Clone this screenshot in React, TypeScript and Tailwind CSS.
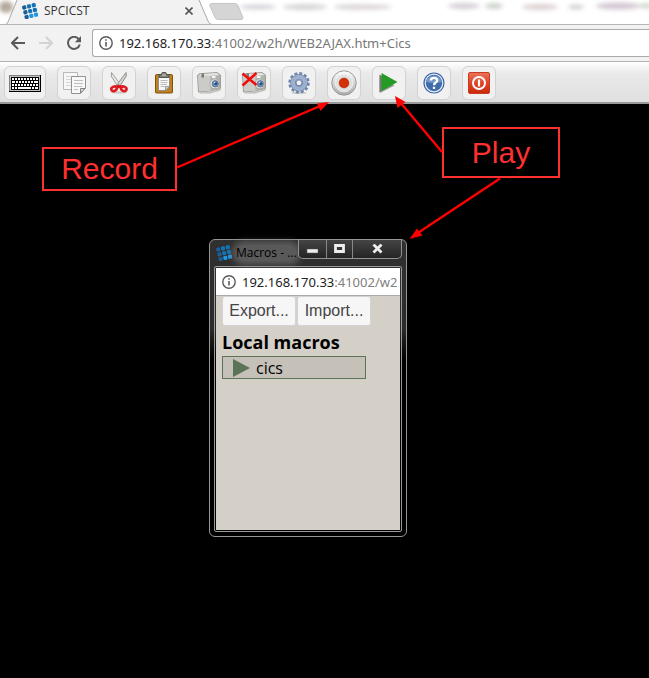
import type { ReactNode } from "react";

function DotsLogo({ className }: { className?: string }) {
  const dots = [0, 1, 2].flatMap((r) => [0, 1, 2].map((c) => ({ r, c })));
  return (
    <svg viewBox="0 0 16 16" className={className} aria-hidden="true">
      <g transform="rotate(-14 8 8)">
        {dots.map(({ r, c }) => (
          <rect
            key={`${r}${c}`}
            x={1.2 + c * 4.9}
            y={1.2 + r * 4.9}
            width="4.1"
            height="4.1"
            rx="1.3"
            fill={c === 0 ? "#1c5d93" : r === 2 ? "#1f97e0" : "#1272b4"}
          />
        ))}
      </g>
    </svg>
  );
}

function InfoIcon() {
  return (
    <svg viewBox="0 0 14 14" className="size-3.5 shrink-0" aria-hidden="true">
      <circle cx="7" cy="7" r="6.2" fill="none" stroke="#5a5a5a" strokeWidth="1.4" />
      <path d="M7 6v4.4M7 3.2v1.6" stroke="#5a5a5a" strokeWidth="1.6" />
    </svg>
  );
}

function NavButton({ label, children }: { label: string; children: ReactNode }) {
  return (
    <button type="button" aria-label={label} className="flex size-7 items-center justify-center">
      {children}
    </button>
  );
}

function ToolButton({ label, wide, children }: { label: string; wide?: boolean; children: ReactNode }) {
  return (
    <button
      type="button"
      aria-label={label}
      title={label}
      className={`h-[34px] shrink-0 overflow-hidden rounded-md border border-[#d2d2d2] bg-[#f1f1f1] ${wide ? "w-[42px]" : "w-[34px]"}`}
    >
      <svg viewBox={wide ? "1 1 40 32" : "1 1 32 32"} className="size-full" aria-hidden="true">
        {children}
      </svg>
    </button>
  );
}

function CameraShape() {
  return (
    <g>
      <path d="M7 26.5 18 26 28.500 23V24.500L18 27.500H8Z" fill="#8b8b87" opacity="0.500" />
      <path d="M5.500 9.500 7 7.800 25 6.500 28.500 9V22.500L18 25 6.500 26Z" fill="#b9bbb5" stroke="#8d8f88" strokeWidth="0.800" />
      <path d="M6 10 18.500 9.500V24.800L7 25.600Z" fill="#cbccc8" />
      <path d="M18.500 9.500 28 9V22.200L18.500 24.800Z" fill="#b2b4ae" />
      <path d="M6.500 9.500 8 8.200 24.500 7 27.500 9 18.500 9.800Z" fill="#e6e7e4" />
      <rect x="9.500" y="7.500" width="2.500" height="4" fill="#777973" />
      <rect x="20" y="10" width="3.500" height="2.200" fill="#f5f5f5" />
      <circle cx="22.800" cy="17.800" r="4.900" fill="#e2e3e0" stroke="#9a9c96" strokeWidth="0.700" />
      <circle cx="23.300" cy="17.800" r="3.200" fill="#6b8fbd" stroke="#5b6b80" strokeWidth="0.800" />
      <circle cx="23.800" cy="17.500" r="1.500" fill="#274b7c" />
      <circle cx="22.600" cy="16.500" r="0.800" fill="#d5e7f8" />
    </g>
  );
}

function KeyboardShape() {
  return (
    <g shapeRendering="crispEdges">
      <rect x="5" y="9" width="32" height="17" fill="#000" />
      <rect x="5" y="9" width="31" height="16" fill="#808080" />
      <rect x="6" y="10" width="30" height="15" fill="#c0c0c0" />
      <rect x="7" y="11" width="28" height="13" fill="#000" />
      <path d="M8 13H34" stroke="#fff" strokeWidth="2" strokeDasharray="2 1" />
      <path d="M8 16H11M12 16H14M15 16H17M18 16H20M21 16H23M24 16H26M27 16H29M30 16H34" stroke="#fff" strokeWidth="2" />
      <path d="M8 19H10M11 19H13M14 19H16M17 19H19M20 19H22M23 19H25M26 19H28M29 19H31M32 19H34" stroke="#fff" strokeWidth="2" />
      <path d="M8 22H10M11 22H13M14 22H27M28 22H30M31 22H34" stroke="#fff" strokeWidth="2" />
    </g>
  );
}

function Toolbar() {
  return (
    <div
      role="toolbar"
      aria-label="Session"
      className="flex h-[42px] gap-[11px] border-b-2 border-[#999] bg-linear-to-b from-white via-[#e9e9e9] via-30% to-[#e0e0e0] px-1 pt-1"
    >
      <ToolButton label="Keyboard" wide>
        <KeyboardShape />
      </ToolButton>
      <ToolButton label="Copy">
        <path d="M6.500 6.500H20.500V23.500H6.500Z" fill="#f7f7f7" stroke="#b8b8b8" />
        <path d="M9 10.500H18M9 13.500H18M9 16.500H18M9 19.500H18" stroke="#d5d5d5" />
        <path d="M14.500 10.500H28.500V22L23.500 27.500H14.500Z" fill="#f8f8f8" stroke="#929292" />
        <path d="M17 14.500H26M17 17.500H26M17 20.500H25M17 23.500H21" stroke="#bebebe" />
        <path d="M23.500 27V22.500H28Z" fill="#ddd" stroke="#777" strokeWidth="0.900" />
      </ToolButton>
      <ToolButton label="Cut">
        <ellipse cx="17" cy="26.500" rx="8" ry="1.200" fill="#ccc" />
        <path d="M9.500 6.500 18.800 19 16.200 21 9.200 10Z" fill="#e9e9e6" stroke="#96968f" strokeWidth="0.900" />
        <path d="M24 6.500 14.800 19 17.300 21 24.300 10Z" fill="#d6d7d3" stroke="#85857f" strokeWidth="0.900" />
        <ellipse cx="12" cy="22.800" rx="2.800" ry="2.200" fill="#f1f1f1" stroke="#df1d20" strokeWidth="2.600" transform="rotate(-25 12 22.800)" />
        <ellipse cx="21.800" cy="22.800" rx="2.800" ry="2.200" fill="#f1f1f1" stroke="#df1d20" strokeWidth="2.600" transform="rotate(25 21.800 22.800)" />
        <path d="M13 20 16.800 18.500 20.800 20 16.800 22.500Z" fill="#d5171b" />
      </ToolButton>
      <ToolButton label="Paste">
        <rect x="8.500" y="8.500" width="17" height="18.500" rx="1" fill="#bf801f" stroke="#80510e" />
        <path d="M11.500 10.500H22.500V21L19 24.500H11.500Z" fill="#f8f8f8" stroke="#777" strokeWidth="0.700" />
        <path d="M13.500 14.500H20.500M13.500 16.500H20.500M13.500 18.500H20M13.500 20.500H18" stroke="#b5b5b5" strokeWidth="0.900" />
        <path d="M18.500 24.500V20.500H22.500Z" fill="#ccc" stroke="#777" strokeWidth="0.600" />
        <path d="M12 11.500V9H14.200L15.200 6.500H18.800L19.800 9H22V11.500Z" fill="#83857d" stroke="#54564f" />
        <path d="M15 9H19" stroke="#cbccc7" />
      </ToolButton>
      <ToolButton label="Capture screen">
        <CameraShape />
      </ToolButton>
      <ToolButton label="Remove capture">
        <CameraShape />
        <path d="M5.500 7.500 19.500 19M19.500 7 5.500 19.500" stroke="#f20d0d" strokeWidth="2.600" />
      </ToolButton>
      <ToolButton label="Settings">
        <ellipse cx="17" cy="26.800" rx="8" ry="1.300" fill="#ccc" />
        <circle cx="17" cy="16.800" r="9.200" fill="none" stroke="#7085aa" strokeWidth="3" strokeDasharray="2.900 1.917" />
        <circle cx="17" cy="16.800" r="6" fill="none" stroke="#7287ab" strokeWidth="5.600" />
        <circle cx="17" cy="16.800" r="6" fill="none" stroke="#9db0cf" strokeWidth="4.200" />
        <circle cx="17" cy="16.800" r="3" fill="#f1f1f1" stroke="#667ba3" />
      </ToolButton>
      <ToolButton label="Record macro">
        <defs>
          <linearGradient id="dial" x1="0" y1="0" x2="0" y2="1">
            <stop offset="0" stopColor="#fff" />
            <stop offset="1" stopColor="#aaa" />
          </linearGradient>
        </defs>
        <circle cx="17" cy="17" r="12.200" fill="url(#dial)" stroke="#9a9a9a" />
        <circle cx="17" cy="17" r="8.800" fill="#e0e0e0" stroke="#f2f2f2" strokeWidth="0.800" />
        <circle cx="17" cy="17" r="4.900" fill="#d22f05" stroke="#b12804" strokeWidth="0.600" />
      </ToolButton>
      <ToolButton label="Play macro">
        <path d="M8 8.500V27L22.500 19.500Z" fill="#444" opacity="0.500" />
        <path d="M7 8.500V26.500L20 19Z" fill="#555" opacity="0.500" />
        <path d="M9.500 7V25L25.500 16Z" fill="#259a25" />
      </ToolButton>
      <ToolButton label="Help">
        <circle cx="17" cy="17" r="10" fill="#e6edf7" stroke="#3b62a2" strokeWidth="1.200" />
        <circle cx="17" cy="17" r="8.200" fill="#3e6ba9" />
        <path d="M9 16A8.200 8.200 0 0 1 25 16Q17 18 9 16Z" fill="#7397c9" />
        <path d="M13.800 14.600Q13.800 11.800 17 11.800T20.200 14.500C20.200 16.600 17 16.500 17 19.200M17 20.800V23" fill="none" stroke="#fff" strokeWidth="2.300" />
      </ToolButton>
      <ToolButton label="Power off">
        <defs>
          <linearGradient id="power" x1="0" y1="0" x2="0" y2="1">
            <stop offset="0" stopColor="#e9735b" />
            <stop offset="0.600" stopColor="#df3d1d" />
            <stop offset="1" stopColor="#c92a0b" />
          </linearGradient>
        </defs>
        <rect x="6.500" y="6.500" width="21" height="21" rx="1.500" fill="url(#power)" stroke="#c83a22" />
        <circle cx="17" cy="17" r="6" fill="none" stroke="#fff" strokeWidth="2" />
        <path d="M17 13.500V20.500" stroke="#fff" strokeWidth="2.200" />
      </ToolButton>
    </div>
  );
}

function TabStrip() {
  return (
    <div className="relative flex h-[25px] items-start overflow-hidden border-b border-[#b5b5b5] bg-white">
      {/* glass backdrop smudges and the tab outlines */}
      <svg className="absolute inset-0 size-full" aria-hidden="true">
        <g style={{ filter: "blur(2px)" }}>
          <ellipse cx="6" cy="7" rx="7" ry="6" fill="#b5a99c" />
          <g opacity="0.500">
            <ellipse cx="258" cy="7" rx="18" ry="2.500" fill="#a9a3b0" />
            <ellipse cx="305" cy="7" rx="22" ry="3" fill="#b0a9ae" />
            <ellipse cx="352" cy="7" rx="18" ry="2.500" fill="#a8b0a8" />
            <ellipse cx="366" cy="7" rx="26" ry="2.500" fill="#b3a5ab" />
            <ellipse cx="464" cy="6" rx="16" ry="3" fill="#a99dab" />
            <ellipse cx="494" cy="6" rx="9" ry="3" fill="#9aa797" />
            <ellipse cx="540" cy="7" rx="18" ry="3" fill="#bda1a3" />
            <ellipse cx="576" cy="7" rx="8" ry="2.500" fill="#a7a1ad" />
            <ellipse cx="618" cy="6" rx="22" ry="3.500" fill="#a78fa6" />
            <ellipse cx="646" cy="6" rx="8" ry="2.500" fill="#9cad9c" />
          </g>
        </g>
        <path d="M0 24.500H5Q7 24.500 8 22L17 0H199L208 21Q209.500 24.500 212 24.500V26H0Z" fill="#f2f2f2" />
        <path d="M0 24.500H5Q7 24.500 8 22L17 0M199 0L208 21Q209.500 24.500 212 24.500" fill="none" stroke="#aaa" />
        <path d="M211 3.500H235Q237 3.500 238 5.500L243 18Q243 19.500 241 19.500H218Q216 19.500 215 17.500L209.500 5Z" fill="#d5d5d5" stroke="#c6c6c6" />
      </svg>
      <div role="tab" aria-selected="true" className="relative ml-[22px] flex h-[22px] w-[173px] items-center gap-1.5">
        <DotsLogo className="size-4" />
        <span className="flex-1 text-[12px] leading-4 text-[#333]">SPCICST</span>
        <button type="button" aria-label="Close tab" className="flex size-3 items-center justify-center">
          <svg viewBox="0 0 8 8" className="size-2" aria-hidden="true">
            <path d="M0.500 0.500 7.500 7.500M7.500 0.500 0.500 7.500" stroke="#555" strokeWidth="1.600" />
          </svg>
        </button>
      </div>
    </div>
  );
}

function AddressRow() {
  return (
    <div className="flex h-[37px] items-center border-b border-[#b0b0b0] bg-[#f2f2f2] pl-1">
      <NavButton label="Back">
        <svg viewBox="0 0 14 14" className="size-3.5" aria-hidden="true">
          <path d="M14 7H1.500M7 1 1 7 7 13" fill="none" stroke="#5a5a5a" strokeWidth="2" />
        </svg>
      </NavButton>
      <NavButton label="Forward">
        <svg viewBox="0 0 14 14" className="size-3.5" aria-hidden="true">
          <path d="M0 7H12.500M7 1 13 7 7 13" fill="none" stroke="#d3d3d3" strokeWidth="2" />
        </svg>
      </NavButton>
      <NavButton label="Reload">
        <svg viewBox="0 0 14 14" className="size-3.5" aria-hidden="true">
          <path d="M12 3.500A6 6 0 1 0 12.800 8.500" fill="none" stroke="#5a5a5a" strokeWidth="2" />
          <path d="M14 0V6.200H7.800Z" fill="#5a5a5a" />
        </svg>
      </NavButton>
      <div className="ml-1 flex h-7 flex-1 items-center gap-1.5 rounded-l-[3px] border border-r-0 border-[#aaa] bg-white pl-1.5">
        <InfoIcon />
        <div className="font-['Noto_Sans',sans-serif] text-[13px] leading-5 text-[#777]">
          <span className="text-[#222]">192.168.170.33</span>:41002/w2h/WEB2AJAX.htm+Cics
        </div>
      </div>
    </div>
  );
}

function MacrosWindow() {
  return (
    <section
      aria-label="Macros"
      className="absolute top-[239px] left-[209px] flex h-[298px] w-[198px] flex-col rounded-md border border-[#969696] bg-linear-to-b from-[#303030] from-0% via-[#2b2b2b] via-30% to-black to-45% px-1 pb-1"
    >
      <header className="flex h-[26px] items-start justify-between">
        <div className="flex h-[26px] items-center gap-1 pl-0.5">
          <DotsLogo className="size-4" />
          <h1 className="rounded-full bg-[#777]/60 text-[12px] leading-4 whitespace-nowrap text-black shadow-[0_0_6px_4px_#77777799]">
            Macros - ...
          </h1>
        </div>
        <div className="flex h-[19px] w-[104px] shrink-0 overflow-hidden rounded-b-[5px] border border-t-0 border-[#929292] bg-linear-to-b from-[#444] to-[#252525]">
          <button type="button" aria-label="Minimize" className="flex w-7 items-center justify-center border-r border-[#888]">
            <svg viewBox="0 0 13 11" className="h-[11px] w-[13px]" aria-hidden="true">
              <rect x="1" y="5" width="11" height="4" fill="#eee" stroke="#555" strokeWidth="0.500" />
            </svg>
          </button>
          <button type="button" aria-label="Maximize" className="flex w-[26px] items-center justify-center border-r border-[#888]">
            <svg viewBox="0 0 13 11" className="h-[11px] w-[13px]" aria-hidden="true">
              <path d="M2.500 1.500H10.500V7.500H2.500Z" fill="none" stroke="#eee" strokeWidth="2.800" />
            </svg>
          </button>
          <button type="button" aria-label="Close" className="flex flex-1 items-center justify-center">
            <svg viewBox="0 0 13 11" className="h-[11px] w-[13px]" aria-hidden="true">
              <path d="M2.500 0.500 10.500 8.500M10.500 0.500 2.500 8.500" stroke="#eee" strokeWidth="2.800" />
            </svg>
          </button>
        </div>
      </header>
      <div className="flex min-h-0 flex-1 flex-col rounded-xs border border-[#999] p-px">
        <div className="flex h-7 shrink-0 items-center gap-1.5 border-b border-[#aaa] bg-white pl-1.5">
          <InfoIcon />
          <div className="font-['Noto_Sans',sans-serif] text-[13px] leading-5 whitespace-nowrap text-[#808080]">
            <span className="text-[#222]">192.168.170.33</span>:41002/w2
          </div>
        </div>
        <div className="flex-1 bg-[#d4d0c8] px-1.5">
          <div className="flex gap-px font-['Liberation_Sans',Arial,sans-serif] text-[16px] text-[#444]">
            <button type="button" className="h-[30px] w-[74px] rounded-[3px] border border-[#d3d3d3] bg-[#f6f6f6]">
              Export...
            </button>
            <button type="button" className="h-[30px] w-[74px] rounded-[3px] border border-[#d3d3d3] bg-[#f6f6f6]">
              Import...
            </button>
          </div>
          <h2 className="pt-1 text-[18px] leading-6 font-bold text-black">Local macros</h2>
          <button
            type="button"
            className="mt-0.5 flex h-[23px] w-36 items-center gap-1.5 border border-[#5b7457] bg-[#c5c0b8] pl-2.5 text-[16px] leading-6 text-black"
          >
            <svg viewBox="0 0 17 18" className="h-[18px] w-[17px]" aria-hidden="true">
              <path d="M0 0V18L17 9Z" fill="#5b7457" />
            </svg>
            cics
          </button>
        </div>
      </div>
    </section>
  );
}

function Callout({ className, children }: { className: string; children: ReactNode }) {
  return (
    <div
      className={`absolute flex items-center justify-center border-2 border-[#ff3030] font-['Liberation_Sans',Arial,sans-serif] text-[30px] leading-9 text-[#ff3030] ${className}`}
    >
      {children}
    </div>
  );
}

export default function App() {
  return (
    <div className="relative min-h-screen overflow-hidden bg-black font-['Open_Sans','Noto_Sans',sans-serif]">
      <TabStrip />
      <AddressRow />
      <Toolbar />
      <main>
        <MacrosWindow />
        <Callout className="top-[147px] left-[42px] h-11 w-[135px]">Record</Callout>
        <Callout className="top-[127px] left-[442px] h-[51px] w-[118px]">Play</Callout>
        <svg className="pointer-events-none absolute inset-0 size-full" aria-hidden="true">
          <g stroke="#f00" strokeWidth="2.400">
            <path d="M177 167.500 320 106" />
            <path d="M442 152 400 102" />
            <path d="M500 178.500 417 233.500" />
          </g>
          <g fill="#f00">
            <path d="M329 102 317 103.500 320.500 111Z" />
            <path d="M395 96 397.500 108 405.500 102Z" />
            <path d="M409.500 239 417 228.500 422.500 235.500Z" />
          </g>
        </svg>
      </main>
    </div>
  );
}
